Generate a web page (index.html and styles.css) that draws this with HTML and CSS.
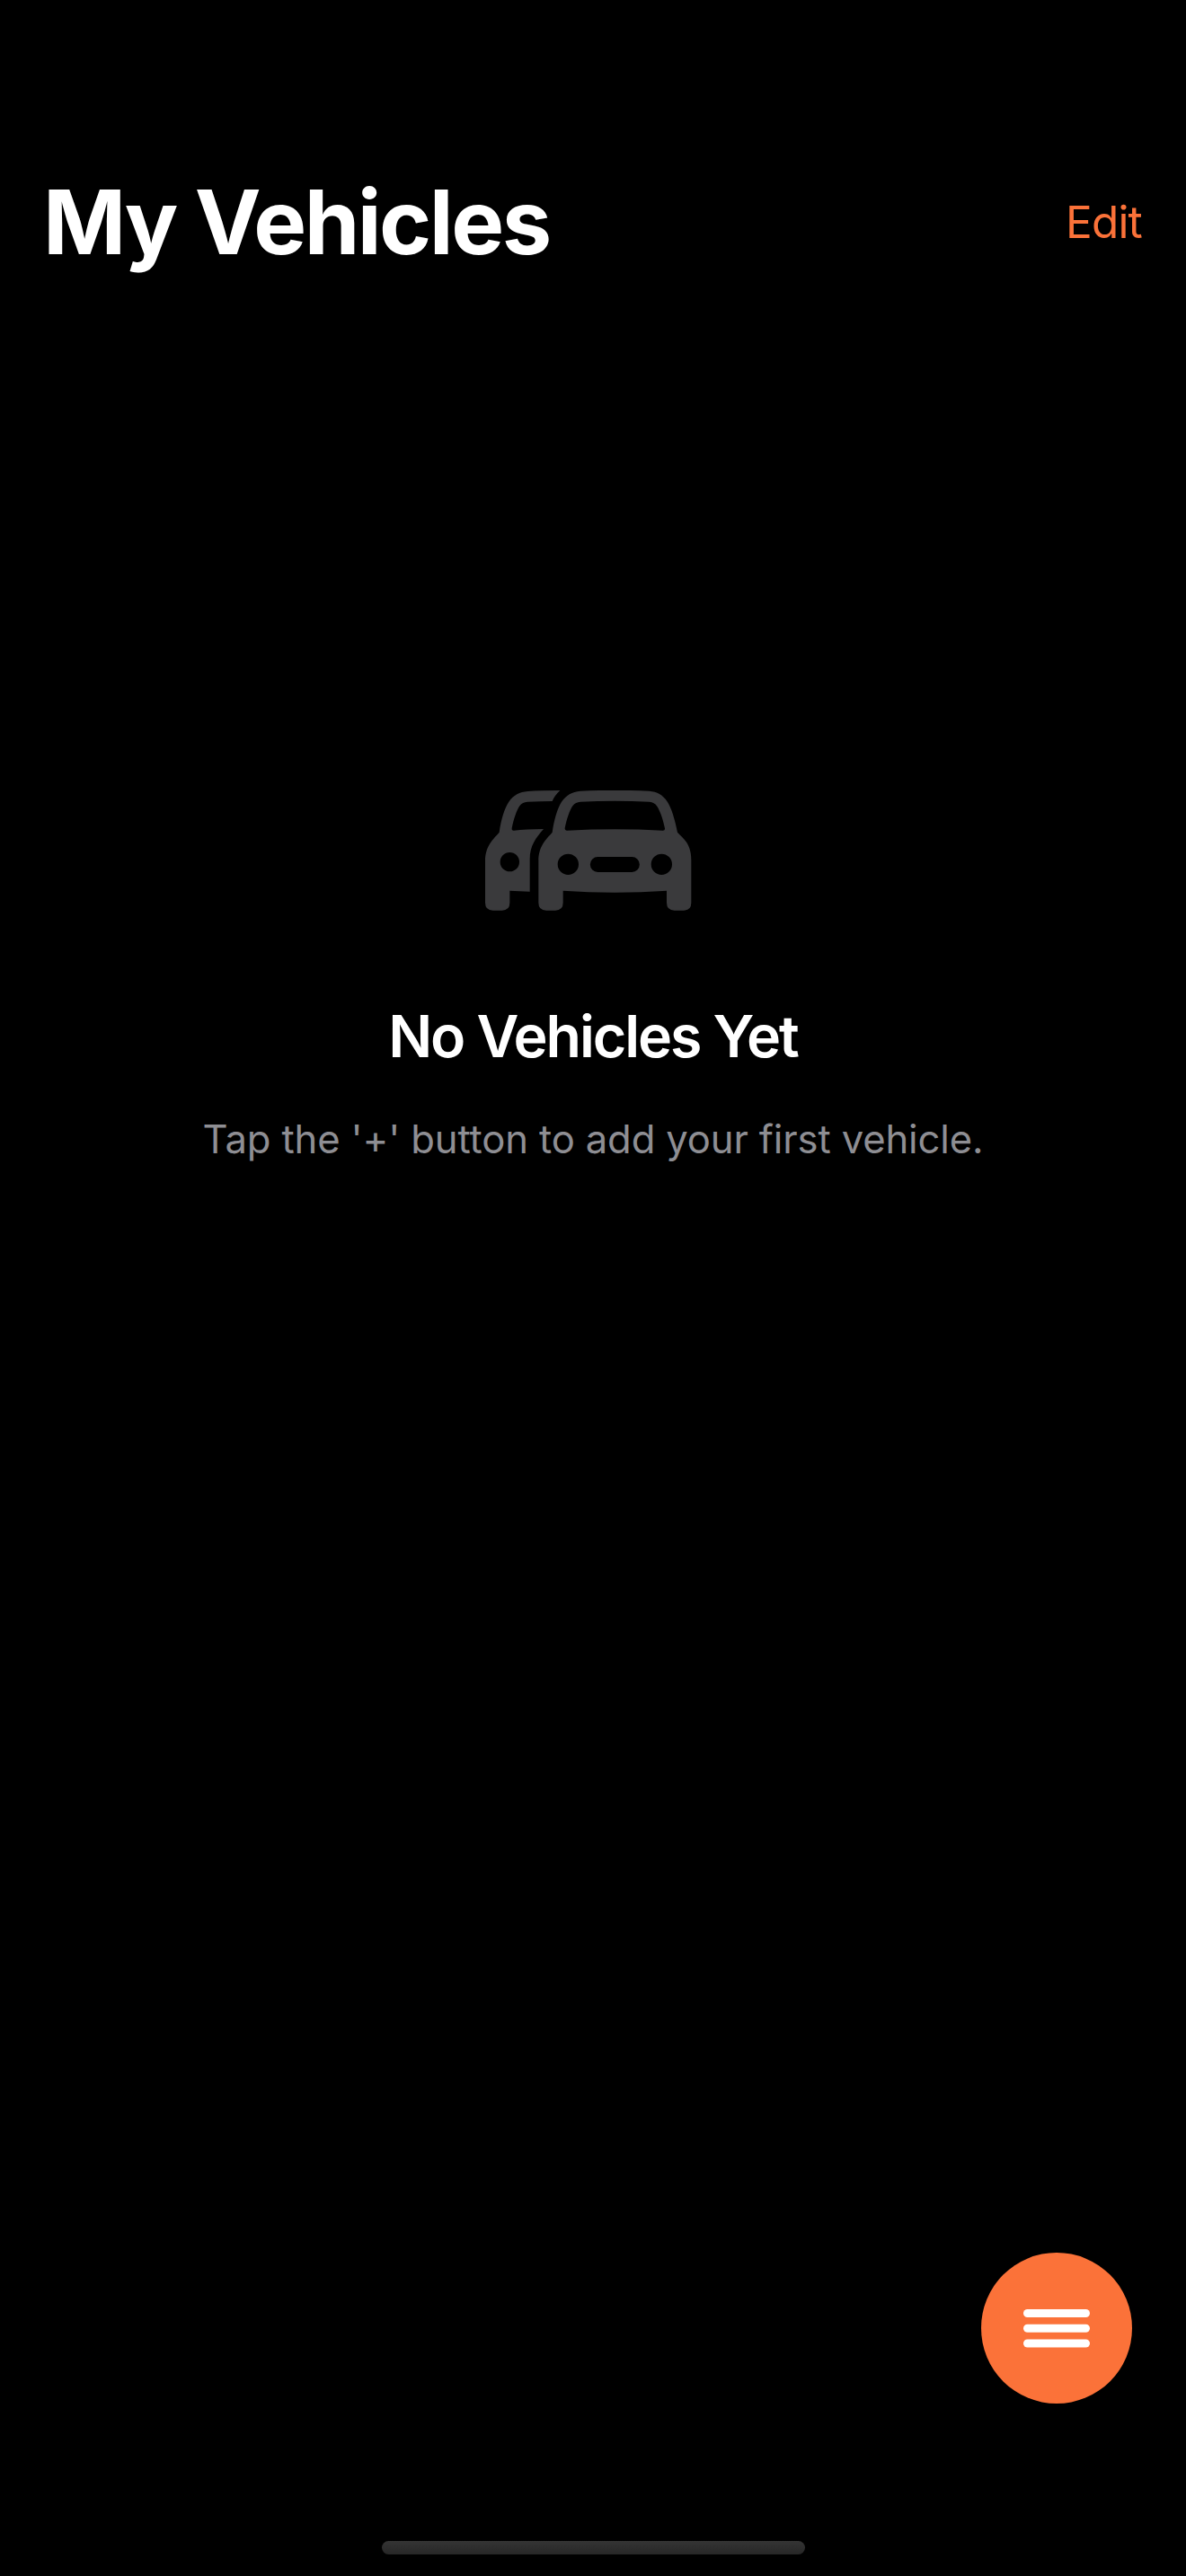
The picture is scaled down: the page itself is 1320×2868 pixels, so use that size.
FILE: index.html
```html
<!DOCTYPE html>
<html lang="en">
<head>
<meta charset="utf-8">
<title>My Vehicles</title>
<link rel="stylesheet" href="styles.css">
</head>
<body>
<div class="screen">
  <header class="header">
    <h1 class="title">My Vehicles</h1>
    <button class="edit">Edit</button>
  </header>
  <main class="empty">
    <svg class="cars" width="230" height="134" viewBox="0 0 690 402" fill="currentColor" fill-rule="evenodd" aria-hidden="true">
      <path d="M178 318V375Q178 401 204 401H234Q260 401 260 375V335Q432 347 606 335V375Q606 401 632 401H662Q688 401 688 375V233C688 180 664 163 642 140C633 96 622 58 607 36C593 15 574 4 548 2Q430 -3 318 2C290 4 270 16 255 38C241 60 230 98 224 140C204 163 178 185 178 236ZM274 134Q265 135 266 126C272 96 282 67 292 52C299 42 307 39 318 38Q432 33 548 38C560 39 567 43 574 53C585 70 594 98 600 127Q601 135 592 134Q433 126 274 134ZM277 212A35 35 0 1 0 277 282A35 35 0 1 0 277 212ZM589 212A35 35 0 1 0 589 282A35 35 0 1 0 589 212ZM376 222A25.500 25.500 0 0 0 376 273H490A25.500 25.500 0 0 0 490 222Z"/>
      <path d="M250 0Q184 0 142 3C115 5 94 16 79 38C64 60 53 98 47 140C27 163 0 185 0 236V375Q0 401 26 401H56Q82 401 82 375V335L149 338V230C149 184 170 158 195 129Q135 130 96 134Q88 135 89 126C95 96 105 67 115 52C122 42 130 39 141 38Q190 36 224 36Q231 18 250 0ZM82 207A32 32 0 1 0 82 271A32 32 0 1 0 82 207Z"/>
    </svg>
    <h2 class="empty-title">No Vehicles Yet</h2>
    <p class="empty-text">Tap the '+' button to add your first vehicle.</p>
  </main>
  <footer class="footer">
    <button class="menu" aria-label="Menu">
      <svg width="74" height="43" viewBox="0 0 74 43" fill="#fff">
        <rect width="74" height="9" rx="4.500"/>
        <rect y="16.800" width="74" height="9" rx="4.500"/>
        <rect y="33.500" width="74" height="9" rx="4.500"/>
      </svg>
    </button>
    <div class="home-indicator"></div>
  </footer>
</div>
</body>
</html>
```
FILE: styles.css
```css
* { box-sizing: border-box; }

body {
  margin: 0;
  background: #000;
  color: #fff;
  font-family: Inter, "Liberation Sans", sans-serif;
}

h1, h2, p { margin: 0; white-space: nowrap; }

button {
  border: 0;
  padding: 0;
  background: none;
  font-family: inherit;
}

.screen {
  display: flex;
  flex-direction: column;
  height: 2868px;
  overflow: hidden;
}

.header {
  display: flex;
  align-items: center;
  justify-content: space-between;
  height: 122px;
  margin-top: 186px;
  padding: 0 49px 0 48px;
}

.title {
  font-size: 99px;
  line-height: 122px;
  font-weight: 700;
  letter-spacing: -2.500px;
}

.edit {
  color: #fb7239;
  font-size: 49.500px;
  line-height: 60px;
  letter-spacing: -0.800px;
}

.empty {
  flex: 1;
  display: flex;
  flex-direction: column;
  align-items: center;
  padding-top: 572px;
}

.cars {
  display: block;
  color: #3a3a3c;
  margin-right: 10px;
}

.empty-title {
  margin-top: 100px;
  font-size: 64.500px;
  line-height: 80px;
  font-weight: 600;
  letter-spacing: -2.100px;
}

.empty-text {
  margin-top: 45px;
  color: #8e8e93;
  font-size: 43.600px;
  line-height: 60px;
  letter-spacing: -0.140px;
}

.footer {
  display: flex;
  flex-direction: column;
  align-items: center;
  height: 360px;
}

.menu {
  display: flex;
  align-items: center;
  justify-content: center;
  align-self: flex-end;
  width: 168px;
  height: 168px;
  margin-right: 60px;
  border-radius: 50%;
  background: #fb7239;
}

.home-indicator {
  width: 471px;
  height: 15px;
  margin-top: 153px;
  margin-left: 1px;
  border-radius: 8px;
  background: linear-gradient(#343434, #272727);
}
```
